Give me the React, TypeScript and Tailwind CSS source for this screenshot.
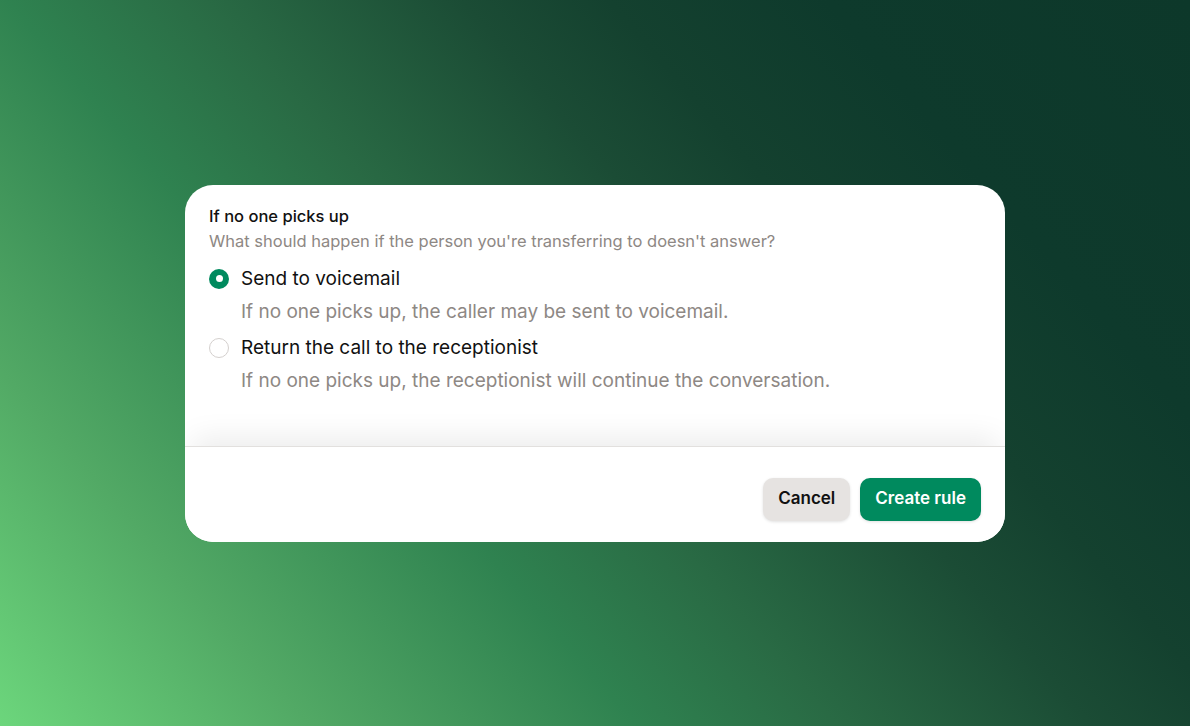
import React, { useState } from "react";

const OPTIONS = [
  {
    id: "voicemail",
    label: "Send to voicemail",
    hint: "If no one picks up, the caller may be sent to voicemail.",
  },
  {
    id: "receptionist",
    label: "Return the call to the receptionist",
    hint: "If no one picks up, the receptionist will continue the conversation.",
  },
];

const Radio = ({ checked }: { checked: boolean }) =>
  checked ? (
    <span className="flex h-5 w-5 items-center justify-center rounded-full bg-[#008a5e]">
      <span className="h-[7px] w-[7px] rounded-full bg-white" />
    </span>
  ) : (
    <span className="h-5 w-5 rounded-full border border-[#d4d0ce] bg-white" />
  );

export default function App() {
  const [choice, setChoice] = useState("voicemail");

  return (
    <div
      className="flex h-[726px] w-full items-center justify-center bg-[linear-gradient(49deg,#6cd67c_0%,#52a965_17%,#2f8250_35%,#296a44_46%,#1b4c35_60%,#14412f_68%,#0e3a2c_80%,#0d382a_100%)]"
      style={{ fontFamily: "Inter, 'Liberation Sans', sans-serif" }}
    >
      <div className="flex w-[820px] flex-col overflow-hidden rounded-[28px] bg-white">
        <div className="px-6 pt-[21px] pb-[53px]">
          <h2 className="text-[16.5px] leading-5 font-medium text-[#111]">If no one picks up</h2>
          <p className="mt-[5px] text-[16.5px] leading-5 text-[#8e8884]">
            What should happen if the person you're transferring to doesn't answer?
          </p>

          <div className="mt-[16px] flex flex-col gap-[12px]">
            {OPTIONS.map(({ id, label, hint }) => (
              <button
                key={id}
                onClick={() => setChoice(id)}
                className="flex flex-col items-start text-left"
              >
                <span className="flex items-center gap-3">
                  <Radio checked={choice === id} />
                  <span className="text-[19px] leading-6 text-[#111]">{label}</span>
                </span>
                <span className="mt-[9px] pl-8 text-[19px] leading-6 text-[#8e8884]">{hint}</span>
              </button>
            ))}
          </div>
        </div>

        <div className="relative z-10 flex justify-end gap-[10px] border-t border-[#e2e0de] bg-white px-6 pt-[31px] pb-[21px] shadow-[0_-16px_30px_-8px_rgba(0,0,0,0.08)]">
          <button className="h-[43px] rounded-[10px] bg-[#e6e3e1] px-[15px] text-[17px] font-semibold text-[#111] shadow-[0_1px_3px_rgba(0,0,0,0.12)]">
            Cancel
          </button>
          <button className="h-[43px] rounded-[10px] bg-[#008a5e] px-[15px] text-[17px] font-semibold text-white shadow-[0_1px_3px_rgba(0,0,0,0.12)]">
            Create rule
          </button>
        </div>
      </div>
    </div>
  );
}
